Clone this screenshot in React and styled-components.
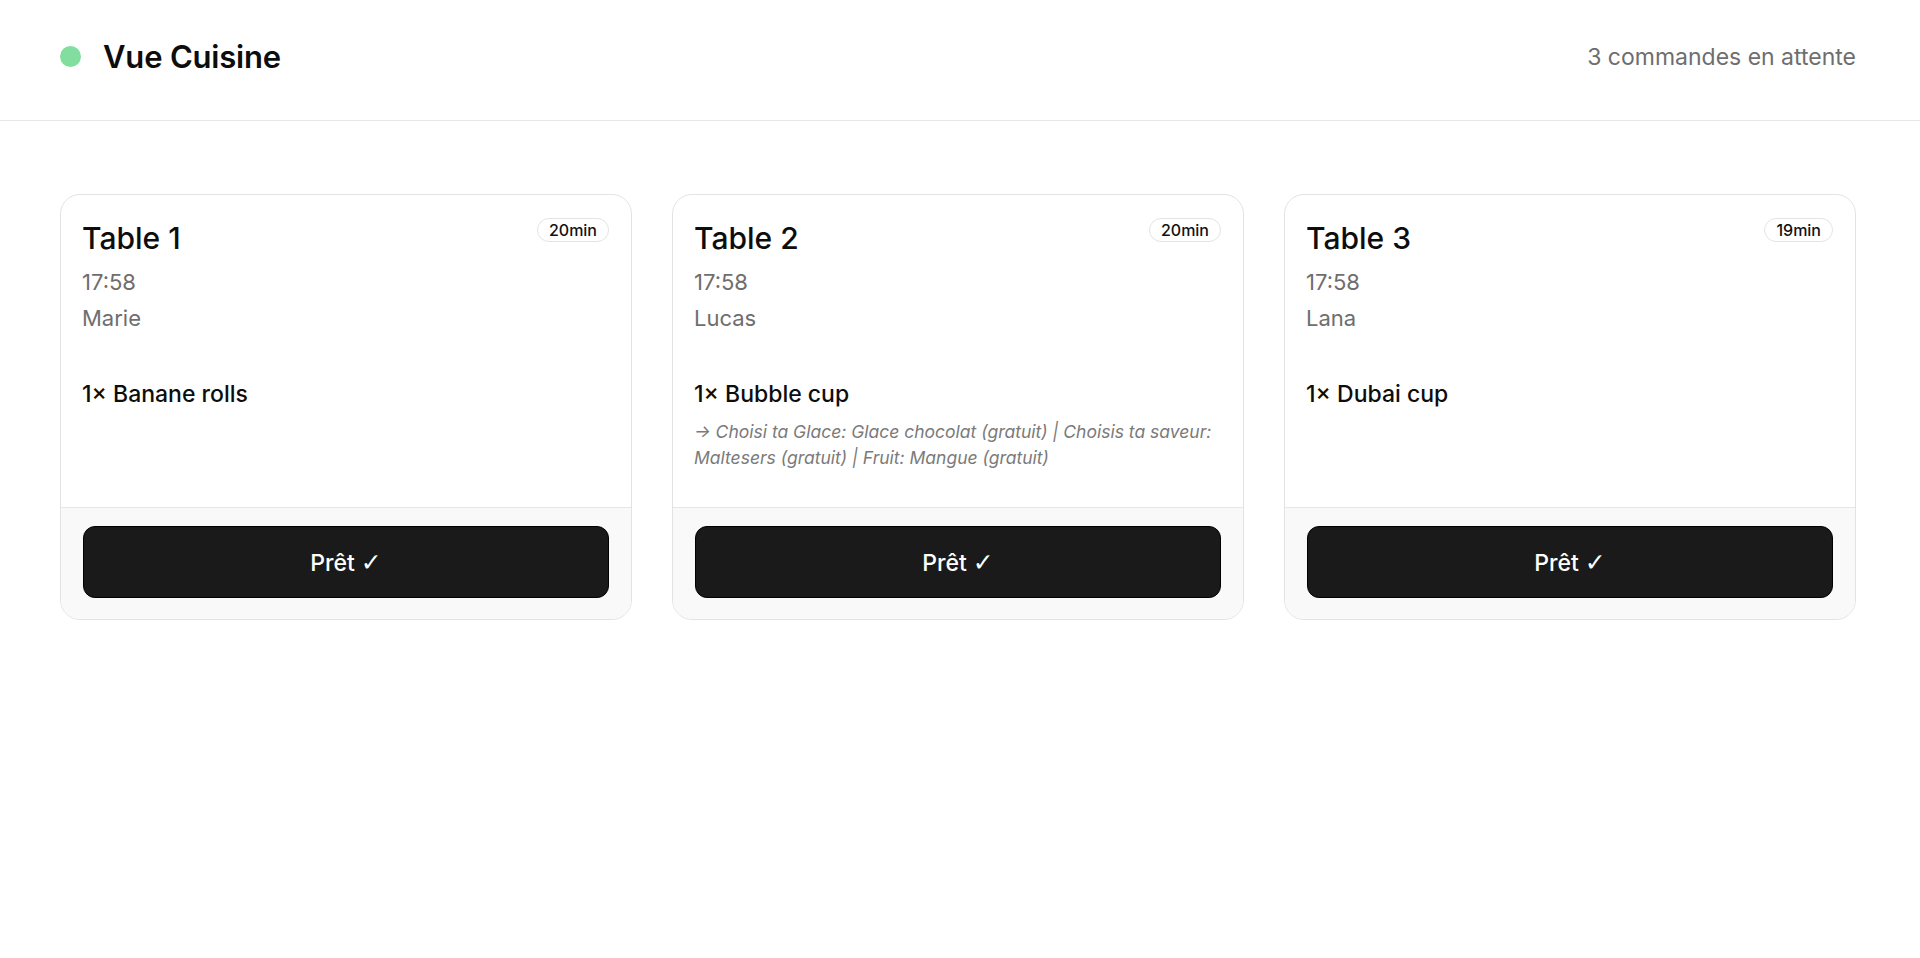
import React from "react";
import styled, { createGlobalStyle } from "styled-components";

const Global = createGlobalStyle`
  * { box-sizing: border-box; }
  html, body { margin: 0; padding: 0; background: #ffffff; }
  body {
    font-family: Inter, "Noto Sans", "Liberation Sans", sans-serif;
    color: #111111;
    -webkit-font-smoothing: antialiased;
  }
`;

const Page = styled.div`
  min-height: 958px;
  background: #ffffff;
`;

const Header = styled.header`
  display: flex;
  align-items: center;
  justify-content: space-between;
  padding: 34px 64px 41px 60px;
  border-bottom: 1px solid #e6e6e6;
`;

const Brand = styled.div`
  display: flex;
  align-items: center;
  gap: 22px;
`;

const StatusDot = styled.span`
  width: 21px;
  height: 21px;
  border-radius: 50%;
  background: #82de9e;
  flex: none;
`;

const Title = styled.h1`
  margin: 0;
  font-size: 31px;
  line-height: 45px;
  font-weight: 600;
  letter-spacing: -0.2px;
  color: #0d0d0d;
`;

const Pending = styled.span`
  font-size: 23px;
  line-height: 32px;
  color: #6e6e6e;
`;

const Main = styled.main`
  padding: 73px 64px 0 60px;
`;

const Grid = styled.div`
  display: grid;
  grid-template-columns: repeat(3, 1fr);
  gap: 40px;
`;

const Card = styled.article`
  display: flex;
  flex-direction: column;
  border: 1px solid #e3e3e3;
  border-radius: 20px;
  overflow: hidden;
  background: #ffffff;
`;

const Body = styled.div`
  flex: 1;
  padding: 23px 22px 36px 21px;
`;

const TopRow = styled.div`
  display: flex;
  align-items: flex-start;
  justify-content: space-between;
`;

const TableName = styled.h2`
  margin: 0;
  font-size: 30px;
  line-height: 40px;
  font-weight: 500;
  color: #0d0d0d;
`;

const Badge = styled.span`
  display: inline-flex;
  align-items: center;
  height: 24px;
  margin-top: 0;
  padding: 0 11px;
  border: 1px solid #e3e3e3;
  border-radius: 999px;
  font-size: 16px;
  font-weight: 500;
  color: #111111;
  background: #ffffff;
`;

const Meta = styled.div`
  margin-top: 6px;
  display: flex;
  flex-direction: column;
`;

const MetaLine = styled.span`
  font-size: 22px;
  line-height: 36px;
  color: #6e6e6e;
`;

const Items = styled.ul`
  list-style: none;
  margin: 42px 0 0;
  padding: 0;
`;

const Item = styled.li`
  display: flex;
  flex-direction: column;
`;

const ItemName = styled.span`
  font-size: 23px;
  line-height: 32px;
  font-weight: 500;
  color: #0d0d0d;
`;

const Options = styled.span`
  margin-top: 9px;
  font-size: 17.5px;
  line-height: 26px;
  font-style: italic;
  color: #7a7a7a;
`;

const Footer = styled.div`
  border-top: 1px solid #e6e6e6;
  background: #f9f9f9;
  padding: 18px 22px 21px;
`;

const ReadyButton = styled.button`
  width: 100%;
  height: 72px;
  border: 1px solid #000000;
  border-radius: 12px;
  background: #1a1a1a;
  color: #ffffff;
  font-family: inherit;
  font-size: 23px;
  font-weight: 500;
  cursor: pointer;
`;

const Check = styled.span`
  font-family: "DejaVu Sans", sans-serif;
  font-size: 25px;
  font-weight: 700;
`;

const orders = [
  { table: "Table 1", wait: "20min", time: "17:58", name: "Marie", items: [{ label: "1× Banane rolls" }] },
  {
    table: "Table 2",
    wait: "20min",
    time: "17:58",
    name: "Lucas",
    items: [
      {
        label: "1× Bubble cup",
        options:
          "→ Choisi ta Glace: Glace chocolat (gratuit) | Choisis ta saveur: Maltesers (gratuit) | Fruit: Mangue (gratuit)",
      },
    ],
  },
  { table: "Table 3", wait: "19min", time: "17:58", name: "Lana", items: [{ label: "1× Dubai cup" }] },
];

export default function App() {
  return (
    <Page>
      <Global />
      <Header>
        <Brand>
          <StatusDot />
          <Title>Vue Cuisine</Title>
        </Brand>
        <Pending>3 commandes en attente</Pending>
      </Header>
      <Main>
        <Grid>
          {orders.map((o) => (
            <Card key={o.table}>
              <Body>
                <TopRow>
                  <TableName>{o.table}</TableName>
                  <Badge>{o.wait}</Badge>
                </TopRow>
                <Meta>
                  <MetaLine>{o.time}</MetaLine>
                  <MetaLine>{o.name}</MetaLine>
                </Meta>
                <Items>
                  {o.items.map((it) => (
                    <Item key={it.label}>
                      <ItemName>{it.label}</ItemName>
                      {it.options && <Options>{it.options}</Options>}
                    </Item>
                  ))}
                </Items>
              </Body>
              <Footer>
                <ReadyButton>
                  Prêt <Check>✓</Check>
                </ReadyButton>
              </Footer>
            </Card>
          ))}
        </Grid>
      </Main>
    </Page>
  );
}
